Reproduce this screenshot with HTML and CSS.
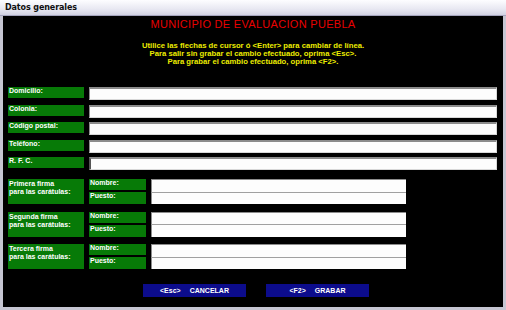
FILE: index.html
```html
<!DOCTYPE html>
<html>
<head>
<title>Datos generales</title>
<link rel="stylesheet" href="styles.css">
</head>
<body>
<section class='window'>
	<div class='title-bar'>Datos generales</div>
	<div class='content'>
		<h1 class='heading'>MUNICIPIO DE EVALUACION PUEBLA</h1>
		<p class='help'>
			Utilice las flechas de cursor ó &lt;Enter&gt; para cambiar de línea.<br>
			Para salir sin grabar el cambio efectuado, oprima &lt;Esc&gt;.<br>
			Para grabar el cambio efectuado, oprima &lt;F2&gt;.
		</p>
		<div class='fields'>
			<div class='field-row'>
				<label class='label'>Domicilio:</label>
				<input class='text-input' type='text' />
			</div>
			<div class='field-row'>
				<label class='label'>Colonia:</label>
				<input class='text-input' type='text' />
			</div>
			<div class='field-row'>
				<label class='label'>Código postal:</label>
				<input class='text-input' type='text' />
			</div>
			<div class='field-row'>
				<label class='label'>Teléfono:</label>
				<input class='text-input' type='text' />
			</div>
			<div class='field-row'>
				<label class='label'>R. F. C.</label>
				<input class='text-input text-input-active' type='text' />
			</div>
		</div>
		<div class='signatures'>
			<div class='sig-group'>
				<div class='label sig-label'>Primera firma<br>para las carátulas:</div>
				<div class='sig-names'>
					<div class='label sub-label'>Nombre:</div>
					<div class='label sub-label sub-label-low'>Puesto:</div>
				</div>
				<div class='sig-inputs'>
					<input class='sig-input' type='text' />
					<input class='sig-input' type='text' />
				</div>
			</div>
			<div class='sig-group'>
				<div class='label sig-label'>Segunda firma<br>para las carátulas:</div>
				<div class='sig-names'>
					<div class='label sub-label'>Nombre:</div>
					<div class='label sub-label sub-label-low'>Puesto:</div>
				</div>
				<div class='sig-inputs'>
					<input class='sig-input' type='text' />
					<input class='sig-input' type='text' />
				</div>
			</div>
			<div class='sig-group'>
				<div class='label sig-label'>Tercera firma<br>para las carátulas:</div>
				<div class='sig-names'>
					<div class='label sub-label'>Nombre:</div>
					<div class='label sub-label sub-label-low'>Puesto:</div>
				</div>
				<div class='sig-inputs'>
					<input class='sig-input' type='text' />
					<input class='sig-input' type='text' />
				</div>
			</div>
		</div>
		<div class='buttons'>
			<button class='btn'><span class='key'>&lt;Esc&gt;</span>CANCELAR</button>
			<button class='btn'><span class='key'>&lt;F2&gt;</span>GRABAR</button>
		</div>
	</div>
</section>
</body>
</html>
```
FILE: styles.css
```css
body {
	margin: 0;
	font-family: "Liberation Sans", Arial, sans-serif;
}

.window {
	width: 506px;
	height: 310px;
	box-sizing: border-box;
	background-color: #c6c6d2;
	display: flex;
	flex-direction: column;
	padding: 0 3px 3px 3px;
}

.title-bar {
	height: 16px;
	margin: 0 -3px;
	box-sizing: border-box;
	padding: 3px 0 0 5px;
	background: linear-gradient(#fdfdff, #e8e8f2 60%, #d2d2e2);
	border-bottom: 1px solid #a4a4bc;
	font-family: "DejaVu Sans", sans-serif;
	font-size: 8px;
	font-weight: bold;
	color: #101010;
	letter-spacing: -0.1px;
}

.content {
	flex: 1;
	background-color: #000;
	display: flex;
	flex-direction: column;
}

.heading {
	margin: 2px 0 0 0;
	text-align: center;
	font-size: 11px;
	font-weight: normal;
	color: #e80000;
	letter-spacing: 0.3px;
	line-height: 12px;
}

.help {
	margin: 12px 0 0 0;
	text-align: center;
	font-size: 7.7px;
	font-weight: bold;
	line-height: 8px;
	color: #ecec00;
}

.fields {
	margin: 21px 0 0 5px;
	display: flex;
	flex-direction: column;
	gap: 4.5px;
}

.field-row {
	display: flex;
	gap: 5px;
	height: 13px;
}

.label {
	background-color: #077a07;
	color: #fff;
	font-size: 7px;
	font-weight: bold;
	line-height: 8px;
	padding: 0 1px;
	box-sizing: border-box;
}

.field-row .label {
	width: 76px;
	height: 11px;
}

.text-input {
	width: 408px;
	height: 13px;
	box-sizing: border-box;
	margin: 0;
	padding: 0;
	background-color: #fdfdfd;
	border: none;
	border-top: 2px solid #8c8c8c;
	border-left: 1px solid #8c8c8c;
	border-right: 1px solid #d8d8d8;
	border-bottom: 1px solid #d8d8d8;
}

.text-input-active {
	border-left: 2px solid #555;
}

.signatures {
	margin: 9px 0 0 5px;
	display: flex;
	flex-direction: column;
	gap: 7px;
}

.sig-group {
	display: flex;
	gap: 5px;
	height: 25.5px;
}

.sig-label {
	width: 76px;
	height: 25px;
	padding-top: 1px;
}

.sig-names {
	display: flex;
	flex-direction: column;
	gap: 2px;
}

.sub-label {
	width: 57px;
	height: 11px;
}

.sub-label-low {
	height: 12px;
}

.sig-inputs {
	display: flex;
	flex-direction: column;
}

.sig-input {
	width: 255px;
	height: 12.5px;
	box-sizing: border-box;
	margin: 0;
	padding: 0;
	background-color: #fdfdfd;
	border: none;
	border-top: 1px solid #8c8c8c;
	border-left: 1px solid #8c8c8c;
}

.sig-input + .sig-input {
	border-top: 1px solid #a0a0a0;
}

.buttons {
	margin: 14px 0 0 140px;
	display: flex;
	gap: 20px;
}

.btn {
	width: 103px;
	height: 13px;
	margin: 0;
	padding: 0;
	border: none;
	background-color: #0c0c8c;
	color: #fff;
	font-family: "Liberation Sans", Arial, sans-serif;
	font-size: 7px;
	font-weight: bold;
	display: flex;
	align-items: center;
	justify-content: center;
	gap: 9px;
}
```
